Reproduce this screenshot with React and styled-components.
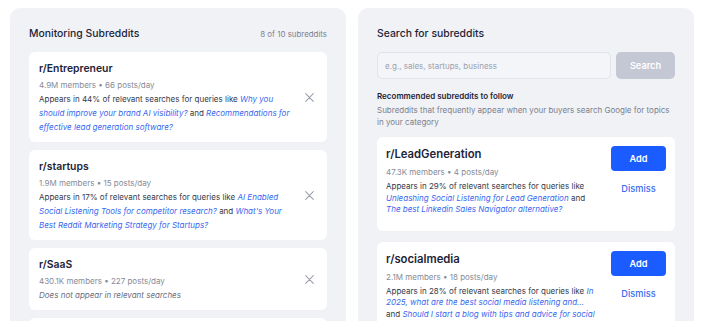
import React from "react";
import styled, { createGlobalStyle } from "styled-components";

const GlobalStyle = createGlobalStyle`
  html, body { margin: 0; padding: 0; background: #ffffff; }
  body { font-family: Inter, "Noto Sans", sans-serif; -webkit-font-smoothing: antialiased; }
  * { box-sizing: border-box; }
`;

const Page = styled.div`
  display: grid;
  grid-template-columns: 336px 336px;
  gap: 12px;
  padding: 8px 10px 0;
  height: 321px;
  overflow: hidden;
`;

const Panel = styled.section`
  background: #f1f2f6;
  border-radius: 10px;
  padding: 18px 19px 20px;
  min-height: 400px;
`;

const PanelHeader = styled.div`
  display: flex;
  align-items: center;
  justify-content: space-between;
  height: 16px;
  margin-bottom: 10px;
`;

const PanelTitle = styled.h2`
  margin: 0;
  font-size: 10.4px;
  font-weight: 500;
  color: #1d2438;
  line-height: 16px;
`;

const Counter = styled.span`
  font-size: 7.9px;
  color: #7d8291;
`;

const CardList = styled.div`
  display: flex;
  flex-direction: column;
  gap: ${(p) => p.$gap}px;
`;

const MonitorCard = styled.div`
  background: #ffffff;
  border-radius: 6px;
  padding: 8px 10px 8px 10px;
  display: flex;
  align-items: center;
`;

const RecCard = styled.div`
  background: #ffffff;
  border-radius: 6px;
  padding: 9px 9px 15px 9px;
  display: flex;
  align-items: flex-start;
  gap: 12px;
`;

const CardBody = styled.div`
  flex: 1;
  min-width: 0;
`;

const CardTitle = styled.div`
  font-size: ${(p) => p.$size}px;
  font-weight: 600;
  color: #1d2438;
  line-height: ${(p) => p.$lh}px;
`;

const Meta = styled.div`
  margin-top: ${(p) => p.$mt || 0}px;
  font-size: 8px;
  color: #868b98;
  line-height: ${(p) => p.$lh}px;
`;

const Desc = styled.div`
  margin-top: ${(p) => p.$mt || 0}px;
  font-size: 8px;
  color: #333a4a;
  line-height: ${(p) => p.$lh}px;
  padding-right: ${(p) => p.$pr}px;
`;

const Query = styled.em`
  color: #3768f0;
  font-style: italic;
`;

const Muted = styled.em`
  color: #6b7080;
  font-style: italic;
`;

const RemoveButton = styled.button`
  width: 16px;
  height: 16px;
  border: 0;
  background: transparent;
  padding: 0;
  display: flex;
  align-items: center;
  justify-content: center;
  color: #9aa0ad;
  flex-shrink: 0;
`;

const SearchRow = styled.div`
  display: flex;
  gap: 5px;
  height: 27px;
`;

const SearchInput = styled.input`
  flex: 1;
  min-width: 0;
  height: 27px;
  border: 1px solid #e1e3ea;
  border-radius: 5px;
  background: #f4f5f8;
  padding: 0 7px;
  font-family: inherit;
  font-size: 8px;
  color: #1d2438;
  outline: none;
  &::placeholder { color: #9ba0ad; }
`;

const SearchButton = styled.button`
  width: 59px;
  height: 27px;
  border: 0;
  border-radius: 5px;
  background: #c4c7d4;
  color: #ffffff;
  font-family: inherit;
  font-size: 9.2px;
  font-weight: 600;
`;

const SectionTitle = styled.div`
  margin-top: 11px;
  font-size: 8px;
  font-weight: 600;
  color: #1d2438;
  line-height: 12px;
`;

const SectionDesc = styled.div`
  margin-top: 2px;
  font-size: 8px;
  color: #7a7f8d;
  line-height: 12px;
  margin-bottom: 9px;
`;

const Actions = styled.div`
  width: 55px;
  display: flex;
  flex-direction: column;
  align-items: center;
  flex-shrink: 0;
`;

const AddButton = styled.button`
  width: 55px;
  height: 25px;
  border: 0;
  border-radius: 4px;
  background: #1a5cff;
  color: #ffffff;
  font-family: inherit;
  font-size: 9.2px;
  font-weight: 600;
`;

const DismissButton = styled.button`
  margin-top: 11px;
  border: 0;
  background: transparent;
  padding: 0;
  color: #3a6cf0;
  font-family: inherit;
  font-size: 9.2px;
  font-weight: 500;
  line-height: 14px;
`;

const XIcon = () => (
  <svg width="9" height="9" viewBox="0 0 9 9" fill="none">
    <path d="M0.7 0.7L8.3 8.3M8.3 0.7L0.7 8.3" stroke="currentColor" strokeWidth="1.1" strokeLinecap="round" />
  </svg>
);

const monitored = [
  {
    name: "r/Entrepreneur",
    meta: "4.9M members • 66 posts/day",
    pct: 44,
    q1: "Why you should improve your brand AI visibility?",
    q2: "Recommendations for effective lead generation software?",
  },
  {
    name: "r/startups",
    meta: "1.9M members • 15 posts/day",
    pct: 17,
    q1: "AI Enabled Social Listening Tools for competitor research?",
    q2: "What's Your Best Reddit Marketing Strategy for Startups?",
  },
  {
    name: "r/SaaS",
    meta: "430.1K members • 227 posts/day",
    pct: null,
  },
  {
    name: "r/marketing",
    meta: "1.8M members • 40 posts/day",
    pct: null,
  },
];

const recommended = [
  {
    name: "r/LeadGeneration",
    meta: "47.3K members • 4 posts/day",
    pct: 29,
    q1: "Unleashing Social Listening for Lead Generation",
    q2: "The best Linkedin Sales Navigator alternative?",
  },
  {
    name: "r/socialmedia",
    meta: "2.1M members • 18 posts/day",
    pct: 28,
    q1: "In 2025, what are the best social media listening and...",
    q2: "Should I start a blog with tips and advice for social media?",
  },
];

export default function App() {
  return (
    <>
      <GlobalStyle />
      <Page>
        <Panel>
          <PanelHeader>
            <PanelTitle>Monitoring Subreddits</PanelTitle>
            <Counter>8 of 10 subreddits</Counter>
          </PanelHeader>
          <CardList $gap={8}>
            {monitored.map((s) => (
              <MonitorCard key={s.name}>
                <CardBody>
                  <CardTitle $size={10.4} $lh={18}>{s.name}</CardTitle>
                  <Meta $lh={14}>{s.meta}</Meta>
                  <Desc $lh={14} $pr={3}>
                    {s.pct == null ? (
                      <Muted>Does not appear in relevant searches</Muted>
                    ) : (
                      <>
                        Appears in {s.pct}% of relevant searches for queries like{" "}
                        <Query>{s.q1}</Query> and <Query>{s.q2}</Query>
                      </>
                    )}
                  </Desc>
                </CardBody>
                <RemoveButton aria-label="Remove">
                  <XIcon />
                </RemoveButton>
              </MonitorCard>
            ))}
          </CardList>
        </Panel>
        <Panel>
          <PanelHeader>
            <PanelTitle>Search for subreddits</PanelTitle>
          </PanelHeader>
          <SearchRow>
            <SearchInput placeholder="e.g., sales, startups, business" />
            <SearchButton>Search</SearchButton>
          </SearchRow>
          <SectionTitle>Recommended subreddits to follow</SectionTitle>
          <SectionDesc>
            Subreddits that frequently appear when your buyers search Google for topics in your category
          </SectionDesc>
          <CardList $gap={11}>
            {recommended.map((s) => (
              <RecCard key={s.name}>
                <CardBody>
                  <CardTitle $size={11.3} $lh={17}>{s.name}</CardTitle>
                  <Meta $mt={3} $lh={12}>{s.meta}</Meta>
                  <Desc $mt={3} $lh={11.6} $pr={0}>
                    Appears in {s.pct}% of relevant searches for queries like{" "}
                    <Query>{s.q1}</Query> and <Query>{s.q2}</Query>
                  </Desc>
                </CardBody>
                <Actions>
                  <AddButton>Add</AddButton>
                  <DismissButton>Dismiss</DismissButton>
                </Actions>
              </RecCard>
            ))}
          </CardList>
        </Panel>
      </Page>
    </>
  );
}
